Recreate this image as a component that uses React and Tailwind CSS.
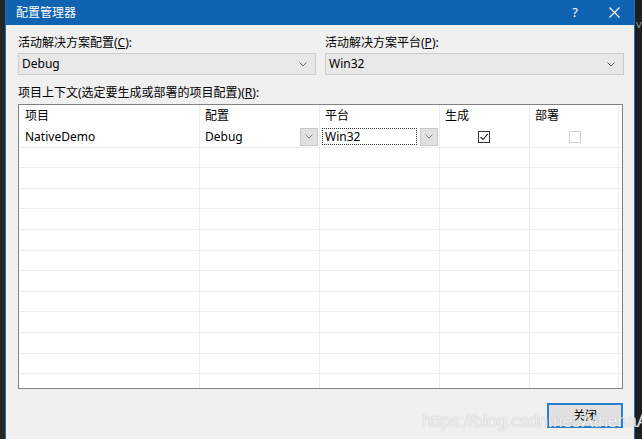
import React from 'react';

const FONT = { fontFamily: '"Noto Sans", "Noto Sans CJK SC", sans-serif' };

function Chevron({ className = '' }) {
  return (
    <svg width="8" height="5" viewBox="0 0 8 5" className={className}>
      <path d="M0.5 0.5 L4 4 L7.5 0.5" fill="none" stroke="currentColor" strokeWidth="1" />
    </svg>
  );
}

function Combo({ value, className = '' }) {
  return (
    <div className={`h-[22px] flex items-center justify-between border border-[#cccccc] bg-[#e8e8e8] pl-[3px] pr-[8px] ${className}`}>
      <span className="text-[12px] text-black">{value}</span>
      <Chevron className="text-[#606060]" />
    </div>
  );
}

function CellButton() {
  return (
    <div className="w-[18px] h-[18px] flex items-center justify-center bg-[#e1e1e1] border border-[#c6c6c6]">
      <Chevron className="text-[#808080]" />
    </div>
  );
}

function Checkbox({ checked, disabled }) {
  return (
    <div className={`w-[12px] h-[12px] border flex items-center justify-center bg-white ${disabled ? 'border-[#cfcfcf]' : 'border-[#333333]'}`}>
      {checked && (
        <svg width="10" height="10" viewBox="0 0 10 10">
          <path d="M1.5 5 L4 7.5 L8.8 2" fill="none" stroke="#222" strokeWidth="1.1" />
        </svg>
      )}
    </div>
  );
}

const cols = 'grid grid-cols-[181px_120px_120px_90px_89px_1fr]';
const cell = 'border-r border-[#ececec] h-full';

export default function App() {
  const emptyRows = Array.from({ length: 12 });
  return (
    <div className="relative w-[642px] h-[439px] bg-[#1f1f1f] flex overflow-hidden select-none" style={FONT}>
      <div className="w-[5px] bg-[#252526]" />
      <div className="w-[630px] flex flex-col border-x border-[#1f6cb5] bg-[#f0f0f0]">
        {/* title bar */}
        <div className="h-[25px] bg-[#0f63b1] flex items-center pl-[10px] pr-[14px] text-white">
          <span className="text-[12px]">配置管理器</span>
          <span className="ml-auto text-[13px] mr-[31px]">?</span>
          <svg width="11" height="11" viewBox="0 0 11 11">
            <path d="M0.5 0.5 L10.5 10.5 M10.5 0.5 L0.5 10.5" stroke="white" strokeWidth="1.2" />
          </svg>
        </div>

        <div className="flex flex-col pl-[12px] pr-[10px] pt-[9px] text-[12px] text-black">
          <div className="flex gap-[9px]">
            <div className="w-[298px] flex flex-col">
              <span className="h-[18px] leading-[18px]">活动解决方案配置(<u>C</u>):</span>
              <Combo value="Debug" className="mt-[1px]" />
            </div>
            <div className="w-[299px] flex flex-col">
              <span className="h-[18px] leading-[18px]">活动解决方案平台(<u>P</u>):</span>
              <Combo value="Win32" className="mt-[1px]" />
            </div>
          </div>

          <span className="mt-[9px] h-[18px] leading-[18px]">项目上下文(选定要生成或部署的项目配置)(<u>R</u>):</span>

          <div className="mt-[2px] w-[605px] h-[285px] border border-[#828282] bg-white overflow-hidden">
            <div className={`${cols} h-[22px]`}>
              <div className={`${cell} pl-[6px] leading-[22px]`}>项目</div>
              <div className={`${cell} pl-[5px] leading-[22px]`}>配置</div>
              <div className={`${cell} pl-[5px] leading-[22px]`}>平台</div>
              <div className={`${cell} pl-[5px] leading-[22px]`}>生成</div>
              <div className={`${cell} pl-[5px] leading-[22px]`}>部署</div>
              <div />
            </div>
            <div className={`${cols} h-[20.6px] border-b border-[#ececec]`}>
              <div className={`${cell} pl-[6px] flex items-center`}>NativeDemo</div>
              <div className={`${cell} pl-[5px] pr-[1px] flex items-center justify-between`}>
                <span>Debug</span>
                <CellButton />
              </div>
              <div className={`${cell} pl-[2px] pr-[1px] flex items-center justify-between`}>
                <div className="w-[95px] h-[17px] border border-dotted border-[#333] flex items-center pl-[2px]">Win32</div>
                <CellButton />
              </div>
              <div className={`${cell} flex items-center justify-center pr-[2px]`}>
                <Checkbox checked />
              </div>
              <div className={`${cell} flex items-center justify-center pl-[2px]`}>
                <Checkbox disabled />
              </div>
              <div />
            </div>
            {emptyRows.map((_, i) => (
              <div key={i} className={`${cols} h-[20.6px] border-b border-[#ececec]`}>
                <div className={cell} />
                <div className={cell} />
                <div className={cell} />
                <div className={cell} />
                <div className={cell} />
                <div />
              </div>
            ))}
          </div>

          <div className="flex justify-end mt-[14px] pr-[1px]">
            <button className="w-[76px] h-[25px] bg-[#e1e1e1] border-2 border-[#2b7fcf] text-[12px] text-black">关闭</button>
          </div>
        </div>
      </div>
      <div className="flex-1 bg-[#1e1e1e] flex flex-col pl-[1px]">
        <span className="mt-[18px] text-[11px] text-[#9a9a9a] leading-none">v</span>
      </div>

      {/* watermark */}
      <span
        className="absolute left-[422px] top-[408px] text-[18px] text-white/80 whitespace-nowrap tracking-[-0.3px]"
        style={{ fontFamily: '"Liberation Sans", sans-serif', textShadow: '0 0 1px rgba(120,120,120,0.6)' }}
      >
        https://blog.csdn.net/AthenaA
      </span>
    </div>
  );
}
